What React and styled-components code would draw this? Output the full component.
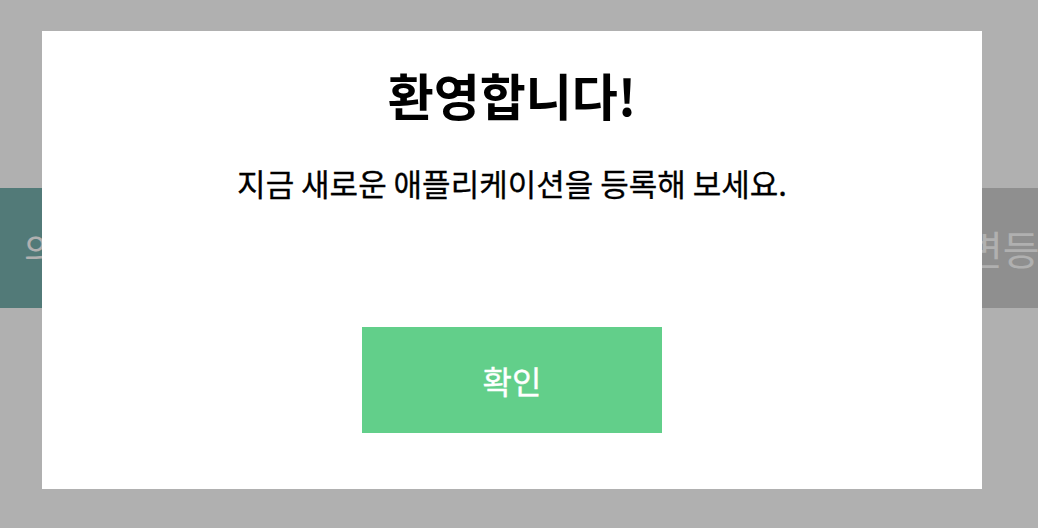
import React from "react";
import styled, { createGlobalStyle } from "styled-components";

const GlobalStyle = createGlobalStyle`
  html, body {
    margin: 0;
    padding: 0;
    background: #ffffff;
    font-family: "Noto Sans CJK KR", "Noto Sans", sans-serif;
    overflow: hidden;
  }
`;

const Page = styled.div`
  width: 1038px;
  height: 528px;
  padding-top: 188px;
  box-sizing: border-box;
`;

const ActionBar = styled.div`
  display: flex;
  height: 120px;
  overflow: hidden;
`;

const ActionTab = styled.div`
  flex: 0 0 519px;
  box-sizing: border-box;
  display: flex;
  align-items: center;
  padding-left: ${(p) => p.$indent}px;
  background: ${(p) => p.$bg};
  color: #ffffff;
  font-size: ${(p) => p.$size}px;
  white-space: nowrap;
  overflow: hidden;
`;

const Overlay = styled.div`
  position: fixed;
  inset: 0;
  background: rgba(0, 0, 0, 0.31);
  padding: 31px 0 0 42px;
`;

const Modal = styled.div`
  width: 940px;
  height: 458px;
  background: #ffffff;
  display: flex;
  flex-direction: column;
  align-items: center;
  box-sizing: border-box;
  padding-top: 28px;
`;

const Title = styled.h1`
  margin: 0;
  font-size: 50px;
  font-weight: 700;
  line-height: 70px;
  color: #000000;
`;

const Message = styled.p`
  margin: 32px 0 0;
  font-size: 31px;
  font-weight: 400;
  line-height: 44px;
  color: #000000;
  -webkit-text-stroke: 0.3px #000000;
`;

const ConfirmButton = styled.button`
  margin-top: 122px;
  width: 300px;
  height: 106px;
  border: none;
  padding: 0;
  background: #62cf8a;
  color: #ffffff;
  font-family: inherit;
  font-size: 32px;
  font-weight: 400;
  -webkit-text-stroke: 0.4px #ffffff;
  cursor: pointer;
`;

export default function App() {
  return (
    <>
      <GlobalStyle />
      <Page>
        <ActionBar>
          <ActionTab $indent={24} $size={34} $bg="#78b1af">
            의뢰 목록
          </ActionTab>
          <ActionTab $indent={447} $size={40} $bg="#cfcfcf">
            변등록
          </ActionTab>
        </ActionBar>
      </Page>
      <Overlay>
        <Modal>
          <Title>환영합니다!</Title>
          <Message>지금 새로운 애플리케이션을 등록해 보세요.</Message>
          <ConfirmButton>확인</ConfirmButton>
        </Modal>
      </Overlay>
    </>
  );
}
